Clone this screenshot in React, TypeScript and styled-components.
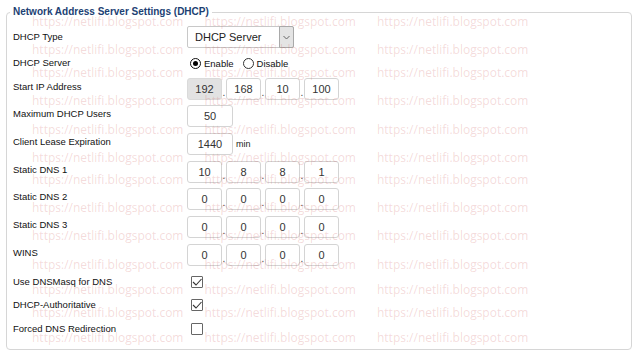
import * as React from 'react';
import styled, { createGlobalStyle } from 'styled-components';

const GlobalStyle = createGlobalStyle`
  html, body {
    margin: 0;
    padding: 0;
    background: #fff;
  }
  body {
    font-family: "Liberation Sans", Arial, sans-serif;
  }
`;

const Page = styled.div`
  position: relative;
  width: 640px;
  height: 363px;
  box-sizing: border-box;
  padding: 6px 8px 0 6px;
  overflow: hidden;
`;

const Fieldset = styled.fieldset`
  margin: 0;
  padding: 8px 8px 9px 6px;
  border: 1px solid #d6d6d6;
  border-radius: 4px;
  min-width: 0;
`;

const Legend = styled.legend`
  padding: 0 3px;
  margin-left: -3px;
  font: bold 10px/12px "Liberation Sans", Arial, sans-serif;
  color: #1d3f73;
`;

const Row = styled.div<{ $mt: number }>`
  display: grid;
  grid-template-columns: 174px auto;
  align-items: center;
  height: 22px;
  margin-top: ${(p) => p.$mt}px;
`;

const Label = styled.div<{ $lift?: boolean }>`
  font-size: 9.5px;
  line-height: 12px;
  color: #111;
  padding-bottom: ${(p) => (p.$lift ? 4 : 0)}px;
`;

const Controls = styled.div`
  display: flex;
  align-items: center;
  height: 22px;
`;

const Select = styled.div`
  width: 107px;
  height: 22px;
  box-sizing: border-box;
  border: 1px solid #c8c8c8;
  border-radius: 2px;
  display: flex;
  font-size: 11px;
  color: #222;
`;

const SelectValue = styled.span`
  flex: 1;
  display: flex;
  align-items: center;
  padding-left: 7px;
`;

const SelectArrow = styled.span`
  width: 13px;
  margin: -1px -1px -1px 0;
  background: #e4e4e4;
  border: 1px solid #a9a9a9;
  border-radius: 0 2px 2px 0;
  display: flex;
  align-items: center;
  justify-content: center;
`;

const RadioItem = styled.label`
  display: flex;
  align-items: center;
  font-size: 9.5px;
  color: #111;
  margin-left: 3px;
  margin-right: 9px;
`;

const RadioDot = styled.span<{ $on?: boolean }>`
  width: 11px;
  height: 11px;
  box-sizing: border-box;
  border-radius: 50%;
  border: ${(p) => (p.$on ? '1.5px solid #111' : '1px solid #333')};
  margin-right: 3px;
  display: flex;
  align-items: center;
  justify-content: center;
  &::after {
    content: '';
    width: 5px;
    height: 5px;
    border-radius: 50%;
    background: ${(p) => (p.$on ? '#000' : 'transparent')};
  }
`;

const NumBox = styled.div<{ $w?: number; $disabled?: boolean }>`
  width: ${(p) => p.$w ?? 35}px;
  height: 22px;
  box-sizing: border-box;
  border: 1px solid ${(p) => (p.$disabled ? '#dadada' : '#d4d4d4')};
  border-radius: 3px;
  background: ${(p) => (p.$disabled ? '#e2e2e2' : '#fff')};
  display: flex;
  align-items: center;
  justify-content: center;
  font-size: 11px;
  color: #333;
`;

const Dot = styled.span`
  width: 4px;
  align-self: flex-end;
  text-align: center;
  font-size: 10px;
  line-height: 14px;
  color: #444;
`;

const Unit = styled.span`
  font-size: 9px;
  color: #222;
  margin-left: 3px;
`;

const Check = styled.span`
  width: 12px;
  height: 12px;
  box-sizing: border-box;
  border: 1px solid #666;
  border-radius: 1px;
  margin-left: 4px;
  display: flex;
  align-items: center;
  justify-content: center;
`;

const Watermarks = styled.div`
  position: absolute;
  inset: 0;
  pointer-events: none;
`;

const WatermarkLine = styled.div`
  position: absolute;
  left: 32px;
  display: flex;
  gap: 21px;
  white-space: nowrap;
  font: 12px/12px "Open Sans", sans-serif;
  color: rgba(200, 70, 70, 0.2);
`;

const ChevronDown = () => (
  <svg width="7" height="5" viewBox="0 0 7 5">
    <polyline points="0.5,1 3.5,4 6.5,1" fill="none" stroke="#666" strokeWidth="1" />
  </svg>
);

const CheckMark = () => (
  <svg width="10" height="8" viewBox="0 0 10 8">
    <polyline points="1,4 4,7 9.5,1" fill="none" stroke="#333" strokeWidth="1.1" />
  </svg>
);

const IpField = ({ parts, disabledFirst }: { parts: string[]; disabledFirst?: boolean }) => (
  <Controls>
    {parts.map((p, i) => (
      <React.Fragment key={i}>
        {i > 0 && <Dot>.</Dot>}
        <NumBox $disabled={disabledFirst && i === 0}>{p}</NumBox>
      </React.Fragment>
    ))}
  </Controls>
);

const watermarkTops = [16, 44, 67, 95, 124, 152, 174, 202, 230, 259, 284, 307, 332];

export default function App() {
  return (
    <Page>
      <GlobalStyle />
      <Fieldset>
        <Legend>Network Address Server Settings (DHCP)</Legend>

        <Row $mt={0}>
          <Label>DHCP Type</Label>
          <Controls>
            <Select>
              <SelectValue>DHCP Server</SelectValue>
              <SelectArrow>
                <ChevronDown />
              </SelectArrow>
            </Select>
          </Controls>
        </Row>

        <Row $mt={4}>
          <Label>DHCP Server</Label>
          <Controls>
            <RadioItem>
              <RadioDot $on />
              Enable
            </RadioItem>
            <RadioItem style={{ marginLeft: 0 }}>
              <RadioDot />
              Disable
            </RadioItem>
          </Controls>
        </Row>

        <Row $mt={4}>
          <Label $lift>Start IP Address</Label>
          <IpField parts={['192', '168', '10', '100']} disabledFirst />
        </Row>

        <Row $mt={5}>
          <Label $lift>Maximum DHCP Users</Label>
          <Controls>
            <NumBox $w={46}>50</NumBox>
          </Controls>
        </Row>

        <Row $mt={6}>
          <Label $lift>Client Lease Expiration</Label>
          <Controls>
            <NumBox $w={46}>1440</NumBox>
            <Unit>min</Unit>
          </Controls>
        </Row>

        <Row $mt={6}>
          <Label $lift>Static DNS 1</Label>
          <IpField parts={['10', '8', '8', '1']} />
        </Row>

        <Row $mt={5}>
          <Label $lift>Static DNS 2</Label>
          <IpField parts={['0', '0', '0', '0']} />
        </Row>

        <Row $mt={6}>
          <Label $lift>Static DNS 3</Label>
          <IpField parts={['0', '0', '0', '0']} />
        </Row>

        <Row $mt={6}>
          <Label $lift>WINS</Label>
          <IpField parts={['0', '0', '0', '0']} />
        </Row>

        <Row $mt={5}>
          <Label>Use DNSMasq for DNS</Label>
          <Controls>
            <Check>
              <CheckMark />
            </Check>
          </Controls>
        </Row>

        <Row $mt={1}>
          <Label>DHCP-Authoritative</Label>
          <Controls>
            <Check>
              <CheckMark />
            </Check>
          </Controls>
        </Row>

        <Row $mt={2}>
          <Label>Forced DNS Redirection</Label>
          <Controls>
            <Check />
          </Controls>
        </Row>
      </Fieldset>

      <Watermarks>
        {watermarkTops.map((t) => (
          <WatermarkLine key={t} style={{ top: t }}>
            <span>https://netlifi.blogspot.com</span>
            <span>https://netlifi.blogspot.com</span>
            <span>https://netlifi.blogspot.com</span>
          </WatermarkLine>
        ))}
      </Watermarks>
    </Page>
  );
}
